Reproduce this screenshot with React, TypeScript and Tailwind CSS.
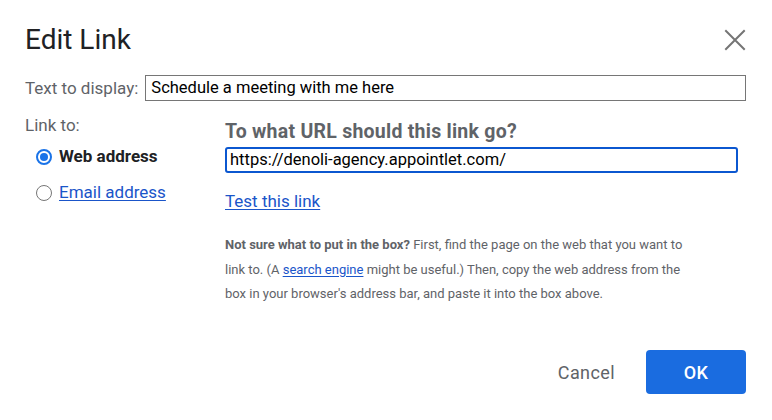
import React from "react";

export default function App() {
  return (
    <div
      className="w-[772px] h-[420px] bg-white flex flex-col pl-[25px] pr-[26px] text-[#5f6368]"
      style={{ fontFamily: "Roboto, 'Liberation Sans', sans-serif" }}
    >
      <div className="flex items-center justify-between pt-[21px] h-[58px]">
        <h1 className="text-[28px] leading-[36px] text-[#202124] font-normal">Edit Link</h1>
        <button className="w-[24px] h-[24px] flex items-center justify-center mr-[-1px]" aria-label="Close">
          <svg width="22" height="22" viewBox="0 0 22 22">
            <path d="M2 2 L20 20 M20 2 L2 20" stroke="#757575" strokeWidth="2" strokeLinecap="square" />
          </svg>
        </button>
      </div>

      <div className="flex items-center mt-[17px] gap-[7px]">
        <span className="text-[17px] leading-[20px] whitespace-nowrap">Text to display:</span>
        <div className="flex-1 h-[26px] border border-[#767676] flex items-center px-[5px] text-[16.5px] text-black">
          Schedule a meeting with me here
        </div>
      </div>

      <div className="flex mt-[14px]">
        <div className="w-[200px] flex flex-col">
          <span className="text-[17px] leading-[20px]">Link to:</span>
          <div className="flex flex-col pl-[11px] mt-[12px] gap-[16px]">
            <label className="flex items-center gap-[7px] h-[20px]">
              <span className="w-[16px] h-[16px] rounded-full border-[2px] border-[#1a73e8] flex items-center justify-center">
                <span className="w-[8px] h-[8px] rounded-full bg-[#1a73e8]" />
              </span>
              <span className="text-[17px] font-bold text-[#202124]">Web address</span>
            </label>
            <label className="flex items-center gap-[7px] h-[20px]">
              <span className="w-[16px] h-[16px] rounded-full border border-[#767676]" />
              <span className="text-[17px] text-[#1a55c9] underline underline-offset-2">Email address</span>
            </label>
          </div>
        </div>
        <div className="flex-1 flex flex-col pt-[6px]">
          <span className="text-[19.5px] leading-[22px] tracking-[0.25px] font-bold text-[#5f6368]">To what URL should this link go?</span>
          <div className="mt-[4px] mr-[8px] h-[26px] border-[2px] border-[#0b57d0] rounded-[3px] flex items-center px-[3px] text-[16.5px] text-black">
            https://denoli-agency.appointlet.com/
          </div>
          <span className="mt-[18px] text-[17px] leading-[20px] text-[#1a55c9] underline underline-offset-2">Test this link</span>
          <p className="mt-[22px] w-[475px] text-[13px] leading-[24.5px] text-[#5f6368]">
            <b className="font-bold">Not sure what to put in the box?</b> First, find the page on the web that you want to link to. (A{" "}
            <span className="text-[#1a55c9] underline underline-offset-2">search engine</span> might be useful.) Then, copy the web address from the box in your browser's address bar, and paste it into the box above.
          </p>
        </div>
      </div>

      <div className="flex justify-end items-center mt-auto mb-[26px] gap-[31px]">
        <button className="text-[18px] tracking-[0.4px] text-[#5f6368] font-normal">Cancel</button>
        <button className="w-[100px] h-[44px] rounded-[4px] bg-[#1a6ce0] text-white text-[18px] font-medium tracking-[0.4px]">OK</button>
      </div>
    </div>
  );
}
